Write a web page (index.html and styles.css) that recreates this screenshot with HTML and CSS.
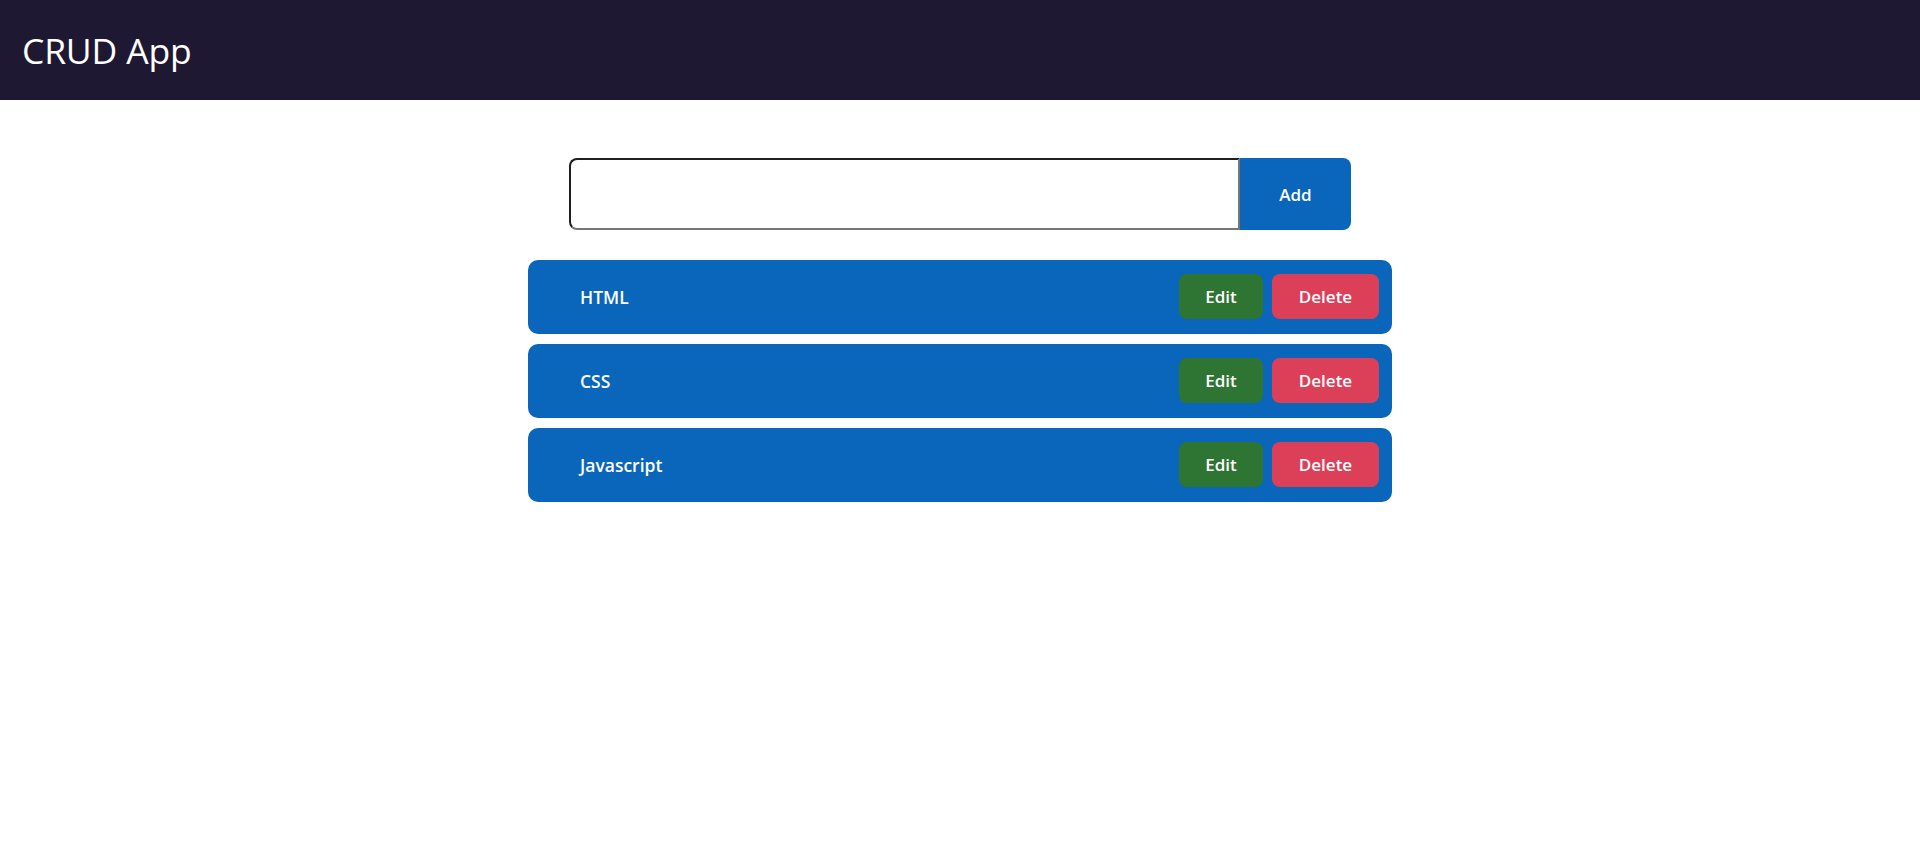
FILE: index.html
```html
<!DOCTYPE html>
<html lang="en">
<head>
<meta charset="utf-8">
<title>CRUD App</title>
<link rel="stylesheet" href="styles.css">
</head>
<body>
<header class="topbar">
  <h1 class="brand">CRUD App</h1>
</header>
<main class="content">
  <form class="add-form">
    <input class="add-input" type="text">
    <button class="add-btn" type="button">Add</button>
  </form>
  <ul class="list">
    <li class="item"><span class="item-text">HTML</span><div class="actions"><button class="btn btn-edit" type="button">Edit</button><button class="btn btn-delete" type="button">Delete</button></div></li>
    <li class="item"><span class="item-text">CSS</span><div class="actions"><button class="btn btn-edit" type="button">Edit</button><button class="btn btn-delete" type="button">Delete</button></div></li>
    <li class="item"><span class="item-text">Javascript</span><div class="actions"><button class="btn btn-edit" type="button">Edit</button><button class="btn btn-delete" type="button">Delete</button></div></li>
  </ul>
</main>
</body>
</html>
```

FILE: styles.css
```css
* { box-sizing: border-box; }
html, body { margin: 0; padding: 0; background: #ffffff; }
body { font-family: "Open Sans", "Noto Sans", sans-serif; color: #fff; }

.topbar {
  height: 100px;
  background: #1e1833;
  display: flex;
  align-items: center;
  padding-left: 22px;
}
.brand {
  margin: 0;
  font-size: 35.5px;
  font-weight: 400;
  color: #fff;
  letter-spacing: -0.2px;
}

.content {
  display: flex;
  flex-direction: column;
  align-items: center;
  padding-top: 58px;
}

.add-form {
  display: flex;
  width: 782px;
  height: 72px;
}
.add-input {
  flex: 1;
  height: 100%;
  border: 2px solid;
  border-color: #1f1f1f #767676 #767676 #1f1f1f;
  border-radius: 8px 0 0 8px;
  font-family: inherit;
  font-size: 18px;
  padding: 0 12px;
  outline: none;
}
.add-btn {
  width: 111px;
  height: 100%;
  border: none;
  background: #0a66bb;
  color: #fff;
  font-family: inherit;
  font-size: 17px;
  font-weight: 600;
  border-radius: 0 8px 8px 0;
}

.list {
  list-style: none;
  margin: 30px 0 0;
  padding: 0;
  width: 864px;
  display: flex;
  flex-direction: column;
  gap: 10px;
}
.item {
  height: 74px;
  background: #0a66bb;
  border-radius: 10px;
  display: flex;
  align-items: center;
  justify-content: space-between;
  padding: 0 13px 1px 52px;
}
.item-text {
  font-size: 17.5px;
  font-weight: 600;
  color: #fff;
}
.actions {
  display: flex;
  gap: 9px;
}
.btn {
  height: 45px;
  border: none;
  border-radius: 8px;
  color: #fff;
  font-family: inherit;
  font-size: 17px;
  font-weight: 600;
}
.btn-edit { width: 84px; background: #2e7433; }
.btn-delete { width: 107px; background: #dc4058; }
```
